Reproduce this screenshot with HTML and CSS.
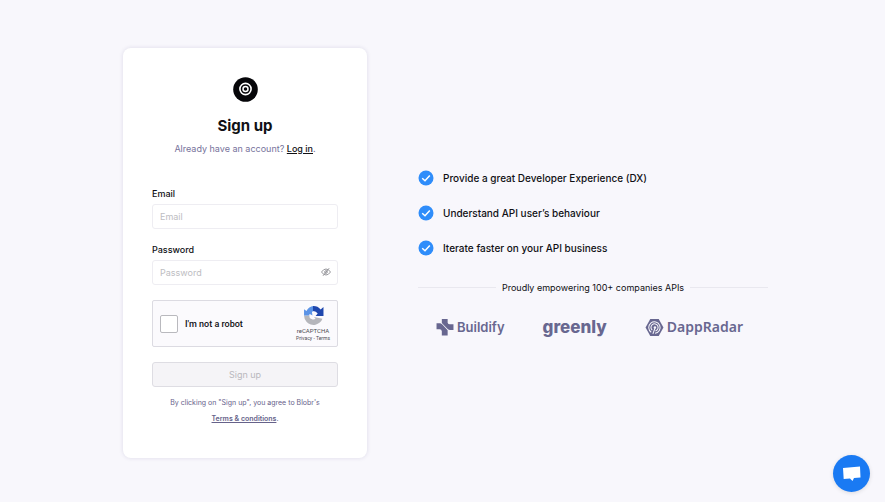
FILE: index.html
```html
<!DOCTYPE html>
<html lang="en">
  <head>
    <meta charset="UTF-8" />
    <meta name="viewport" content="width=device-width, initial-scale=1.0" />
    <title>Sign up</title>
    <link rel="stylesheet" href="styles.css">
  </head>
  <body>
    <main class="page">
      <form class="card">
        <svg class="logo" viewBox="0 0 25 25" aria-hidden="true">
          <circle cx="12.5" cy="12.5" r="12.3" fill="#060609" />
          <circle cx="12.5" cy="12" r="5.6" fill="none" stroke="#fff" stroke-width="1.6" />
          <circle cx="12.5" cy="12" r="2.5" fill="#060609" stroke="#fff" stroke-width="1.5" />
        </svg>
        <h1>Sign up</h1>
        <p class="login">Already have an account? <a href="#">Log in</a>.</p>

        <div class="form-group">
          <label for="email">Email</label>
          <input type="email" id="email" class="field" placeholder="Email" />
        </div>

        <div class="form-group">
          <label for="password">Password</label>
          <div class="password">
            <input type="password" id="password" class="field" placeholder="Password" />
            <button type="button" class="toggle" aria-label="Show password">
              <svg viewBox="0 0 12 10" fill="none" stroke="#97979c" stroke-width="1">
                <path d="M1.500 5Q3.500 2 6 2T10.500 5Q8.500 8 6 8T1.500 5Z" />
                <circle cx="6" cy="5" r="1.300" />
                <path d="M3 8.800L9.200 1.200" />
              </svg>
            </button>
          </div>
        </div>

        <div class="captcha">
          <input type="checkbox" id="robot" />
          <label for="robot">I'm not a robot</label>
          <div class="captcha-brand">
            <svg viewBox="0 0 20 20" aria-hidden="true">
              <path fill="#b5b6bb" d="M1 10H6.500L6 11.500A4.200 4.200 0 0 0 12 13.200L10.500 11.500L18.500 13A9 9 0 0 1 3.500 16.200A9 9 0 0 1 1 10Z" />
              <path fill="#5b93e6" d="M1 10V4L3.300 5.600A9 9 0 0 1 10 1V6L8.500 6.500L9 10L6.500 8.500L5.500 10Z" />
              <path fill="#1f47ae" d="M9.500 1A9 9 0 0 1 16.800 4.200L19.500 2V10.500H12L14 8.200A5 5 0 0 0 9.500 5.800Z" />
            </svg>
            <span class="captcha-name">reCAPTCHA</span>
            <span class="captcha-links"><a href="#">Privacy</a> - <a href="#">Terms</a></span>
          </div>
        </div>

        <button type="submit" class="submit" disabled>Sign up</button>
        <p class="terms">
          By clicking on "Sign up", you agree to Blobr's<br />
          <a href="#">Terms &amp; conditions</a>.
        </p>
      </form>

      <section class="pitch">
        <ul class="benefits">
          <li>
            <svg viewBox="0 0 16 16"><circle cx="8" cy="8" r="7.500" /><path d="M4.200 8.300L7 10.800L11.800 5.500" /></svg>
            Provide a great Developer Experience (DX)
          </li>
          <li>
            <svg viewBox="0 0 16 16"><circle cx="8" cy="8" r="7.500" /><path d="M4.200 8.300L7 10.800L11.800 5.500" /></svg>
            Understand API user’s behaviour
          </li>
          <li>
            <svg viewBox="0 0 16 16"><circle cx="8" cy="8" r="7.500" /><path d="M4.200 8.300L7 10.800L11.800 5.500" /></svg>
            Iterate faster on your API business
          </li>
        </ul>

        <p class="divider">Proudly empowering 100+ companies APIs</p>

        <div class="companies">
          <div class="company buildify">
            <svg viewBox="0 0 17 17">
              <path d="M5.500 1H11V4.500Q11.500 6 13 6H16.500V11.300H13Q11.500 11.200 10.500 10L5.500 4.800Z" />
              <path d="M.5 5H4Q5 5.200 6 6.200L11 11.500V16.500H5.500V12.500Q5.300 10.800 3.500 10.700H.5Z" />
            </svg>
            Buildify
          </div>
          <div class="company greenly">greenly</div>
          <div class="company dappradar">
            <svg viewBox="0 0 18 18">
              <path d="M5 1H13L17.500 9L13 17H5L.5 9Z" />
              <g fill="none" stroke="#f8f7fc" stroke-width="1">
                <path d="M5.900 13.500A5.400 5.400 0 1 1 9.500 14.400" />
                <path d="M6.800 11.500A3.400 3.400 0 1 1 10 12.200" />
                <path d="M7.500 15L9.500 9.500" />
              </g>
              <circle cx="9.400" cy="9" r="1.200" fill="#f8f7fc" />
            </svg>
            DappRadar
          </div>
        </div>
      </section>
    </main>

    <button type="button" class="chat" aria-label="Open chat">
      <svg viewBox="0 0 20 18"><path fill="#fff" d="M1 3L18 1.500L18.500 12.500L12 13.100L10.500 16L8 13.500L1.700 14Z" /></svg>
    </button>
  </body>
</html>
```

FILE: styles.css
```css
* {
  box-sizing: border-box;
}
body {
  margin: 0;
  background-color: #f8f7fc;
  color: #101014;
  font-family: Inter, sans-serif;
  font-size: 9px;
  line-height: 12px;
}
h1,
p,
ul {
  margin: 0;
  padding: 0;
}
input,
button {
  font-family: inherit;
}
.page {
  display: flex;
  align-items: center;
  justify-content: center;
  gap: 51px;
  min-height: 100vh;
  padding: 4px 0 0 6px;
}
.card {
  display: flex;
  flex-direction: column;
  width: 244px;
  padding: 29px 29px 31px;
  border-radius: 8px;
  background-color: #fff;
  box-shadow: 0 0 4px rgba(60, 50, 110, 0.14);
}
.logo {
  align-self: center;
  width: 25px;
  height: 25px;
}
h1 {
  margin-top: 14px;
  font-size: 15px;
  font-weight: 700;
  line-height: 20px;
  text-align: center;
}
.login {
  margin: 6px 0 17px;
  color: #77739c;
  line-height: 14px;
  text-align: center;
}
.login a {
  color: #101014;
  font-weight: 500;
}
.form-group {
  display: flex;
  flex-direction: column;
  gap: 4px;
  margin-top: 15px;
}
.form-group label {
  font-weight: 500;
}
.field {
  width: 100%;
  height: 25px;
  padding: 0 7px;
  border: 1px solid #eeedf2;
  border-radius: 3px;
  background-color: #fff;
  font-size: 9px;
}
.field::placeholder {
  color: #bdbdc2;
}
.password {
  position: relative;
}
.toggle {
  position: absolute;
  top: 7px;
  right: 6px;
  padding: 0;
  border: none;
  background: none;
}
.toggle svg {
  display: block;
  width: 12px;
  height: 10px;
}
.captcha {
  display: flex;
  align-items: center;
  gap: 7px;
  height: 47px;
  margin-top: 15px;
  padding: 0 7px;
  border: 1px solid #dcdbe2;
  border-radius: 2px;
  background-color: #fbfafd;
}
.captcha input {
  appearance: none;
  width: 18px;
  height: 18px;
  margin: 0;
  border: 1px solid #b9b9be;
  border-radius: 2px;
  background-color: #fff;
}
.captcha label {
  flex: 1;
  font-family: Roboto, sans-serif;
  font-weight: 500;
}
.captcha-brand {
  display: flex;
  flex-direction: column;
  align-items: center;
  color: #4c4c52;
  font-family: Roboto, sans-serif;
}
.captcha-brand svg {
  width: 21px;
  height: 21px;
  margin-bottom: 1px;
}
.captcha-name {
  font-size: 6px;
  line-height: 8px;
}
.captcha-links {
  font-size: 5px;
  line-height: 7px;
}
.captcha-links a {
  color: inherit;
  text-decoration: none;
}
.submit {
  height: 25px;
  margin-top: 15px;
  border: 1px solid #dedde3;
  border-radius: 3px;
  background-color: #f5f4f7;
  color: #b9b8bd;
  font-size: 9px;
}
.terms {
  margin-top: 8px;
  color: #66628a;
  font-size: 7px;
  line-height: 16px;
  text-align: center;
}
.terms a {
  color: inherit;
  font-weight: 600;
}
.pitch {
  width: 350px;
}
.benefits {
  display: flex;
  flex-direction: column;
  gap: 19px;
  list-style: none;
}
.benefits li {
  display: flex;
  align-items: center;
  gap: 9px;
  font-size: 10px;
  font-weight: 500;
  line-height: 16px;
}
.benefits svg {
  width: 16px;
  height: 16px;
  fill: #2f8dfa;
}
.benefits path {
  fill: none;
  stroke: #fff;
  stroke-width: 1.5;
}
.divider {
  display: flex;
  align-items: center;
  gap: 6px;
  margin-top: 26px;
}
.divider::before,
.divider::after {
  content: "";
  flex: 1;
  height: 1px;
  background-color: #e9e8ef;
}
.companies {
  display: flex;
  align-items: center;
  justify-content: space-between;
  margin-top: 24px;
  padding: 0 25px 0 18px;
  color: #686790;
}
.company {
  display: flex;
  align-items: center;
  gap: 3px;
  line-height: 18px;
}
.company svg {
  width: 18px;
  height: 18px;
  fill: #686790;
}
.buildify {
  font-size: 13px;
  font-weight: 600;
}
.greenly {
  font-size: 17px;
  font-weight: 800;
}
.dappradar {
  font-family: "Noto Sans", sans-serif;
  font-size: 14px;
  font-weight: 600;
}
.dappradar svg {
  width: 19px;
  height: 19px;
}
.chat {
  position: fixed;
  right: 15px;
  bottom: 10px;
  display: flex;
  align-items: center;
  justify-content: center;
  width: 37px;
  height: 37px;
  padding: 0;
  border: none;
  border-radius: 50%;
  background-color: #1a7af3;
  box-shadow: 0 1px 4px rgba(0, 0, 0, 0.12);
}
.chat svg {
  width: 20px;
  height: 18px;
}
```
